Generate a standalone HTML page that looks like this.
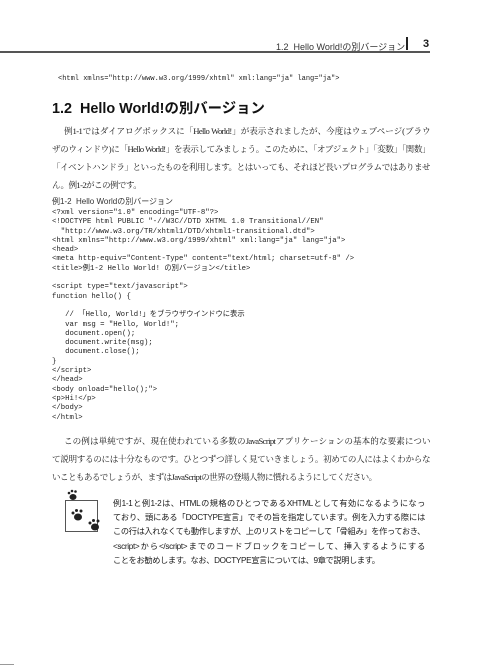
<!DOCTYPE html>
<html><head><meta charset="utf-8"><style>
body{margin:0;width:488px;height:669px;background:#fff;position:relative;overflow:hidden;color:#1a1a1a}
.a{position:absolute;white-space:nowrap}
.m{font-family:"Liberation Mono","Noto Sans CJK JP",monospace;font-size:7.3px;color:#222}
.s{font-family:"Liberation Serif","Noto Serif CJK SC",serif;font-size:8.6px;letter-spacing:-0.62px;width:378px;text-align:justify;text-align-last:justify;overflow:hidden;height:14px;line-height:14px}
.g{font-family:"Liberation Sans","Noto Sans CJK JP",sans-serif}
.n{font-size:8.2px;letter-spacing:-0.35px;width:312px;text-align:justify;text-align-last:justify;overflow:hidden;height:13px;line-height:13px}
</style></head><body>
<div class="a g" style="left:276px;top:40px;font-size:9px;color:#333">1.2&nbsp; Hello World!の別バージョン</div>
<div class="a" style="left:406px;top:37px;width:1.5px;height:13px;background:#222"></div>
<div class="a g" style="left:423px;top:38px;font-size:11px;font-weight:bold">3</div>
<div class="a" style="left:0;top:51px;width:430px;height:1.5px;background:#555"></div>

<div class="a m" style="left:58px;top:75px;font-size:7px">&lt;html xmlns="http://www.w3.org/1999/xhtml" xml:lang="ja" lang="ja"&gt;</div>

<div class="a g" style="left:52px;top:97px;font-size:14.4px;font-weight:bold;color:#111">1.2&nbsp; Hello World!の別バージョン</div>

<div class="a s" style="left:64px;top:124px;width:366px">例1-1ではダイアログボックスに「Hello World!」が表示されましたが、今度はウェブページ(ブラウ</div>
<div class="a s" style="left:52px;top:142px">ザのウィンドウ)に「Hello World!」を表示してみましょう。このために、「オブジェクト」「変数」「関数」</div>
<div class="a s" style="left:52px;top:160px">「イベントハンドラ」といったものを利用します。とはいっても、それほど長いプログラムではありませ</div>
<div class="a s" style="left:52px;top:178px;text-align-last:left">ん。例1-2がこの例です。</div>

<div class="a g" style="left:52px;top:196px;font-size:8px;color:#333">例1-2&nbsp; Hello Worldの別バージョン</div>
<div class="a m" style="left:52px;top:209px;line-height:9.3px">&lt;?xml version="1.0" encoding="UTF-8"?&gt;<br>&lt;!DOCTYPE html PUBLIC "-//W3C//DTD XHTML 1.0 Transitional//EN"<br>&nbsp; "http://www.w3.org/TR/xhtml1/DTD/xhtml1-transitional.dtd"&gt;<br>&lt;html xmlns="http://www.w3.org/1999/xhtml" xml:lang="ja" lang="ja"&gt;<br>&lt;head&gt;<br>&lt;meta http-equiv="Content-Type" content="text/html; charset=utf-8" /&gt;<br>&lt;title&gt;例1-2 Hello World! の別バージョン&lt;/title&gt;<br><br>&lt;script type="text/javascript"&gt;<br>function hello() {<br><br>&nbsp;&nbsp; // 「Hello, World!」をブラウザウインドウに表示<br>&nbsp;&nbsp; var msg = "Hello, World!";<br>&nbsp;&nbsp; document.open();<br>&nbsp;&nbsp; document.write(msg);<br>&nbsp;&nbsp; document.close();<br>}<br>&lt;/script&gt;<br>&lt;/head&gt;<br>&lt;body onload="hello();"&gt;<br>&lt;p&gt;Hi!&lt;/p&gt;<br>&lt;/body&gt;<br>&lt;/html&gt;</div>

<div class="a s" style="left:64px;top:434px;width:366px">この例は単純ですが、現在使われている多数のJavaScriptアプリケーションの基本的な要素につい</div>
<div class="a s" style="left:52px;top:452px">て説明するのには十分なものです。ひとつずつ詳しく見ていきましょう。初めての人にはよくわからな</div>
<div class="a s" style="left:52px;top:470px;text-align-last:left">いこともあるでしょうが、まずはJavaScriptの世界の登場人物に慣れるようにしてください。</div>

<div class="a" style="left:65px;top:500px;width:31px;height:30px;border:1px solid #555"></div>
<svg class="a" style="left:60px;top:488px" width="50" height="50" viewBox="0 0 50 50" fill="#222">
<g transform="translate(13,7)"><ellipse cx="0" cy="2" rx="3.5" ry="3"/><circle cx="-4" cy="-2" r="1.3"/><circle cx="-1" cy="-4" r="1.3"/><circle cx="2.5" cy="-3.5" r="1.3"/></g>
<g transform="translate(18,27)"><ellipse cx="0" cy="2" rx="4" ry="3.5"/><circle cx="-5" cy="-2" r="1.5"/><circle cx="-1.5" cy="-4.5" r="1.5"/><circle cx="3" cy="-4" r="1.5"/></g>
<g transform="translate(35,37)"><ellipse cx="0" cy="2" rx="4" ry="3.5"/><circle cx="-5" cy="-2" r="1.5"/><circle cx="-1.5" cy="-4.5" r="1.5"/><circle cx="3" cy="-4" r="1.5"/></g>
</svg>

<div class="a g n" style="left:113px;top:497px">例1-1と例1-2は、HTMLの規格のひとつであるXHTMLとして有効になるようになっ</div>
<div class="a g n" style="left:113px;top:511px">ており、頭にある「DOCTYPE宣言」でその旨を指定しています。例を入力する際には</div>
<div class="a g n" style="left:113px;top:525px">この行は入れなくても動作しますが、上のリストをコピーして「骨組み」を作っておき、</div>
<div class="a g n" style="left:113px;top:540px">&lt;script&gt;から&lt;/script&gt;までのコードブロックをコピーして、挿入するようにする</div>
<div class="a g n" style="left:113px;top:554px;text-align-last:left">ことをお勧めします。なお、DOCTYPE宣言については、9章で説明します。</div>

<div class="a" style="left:0;top:664px;width:14px;height:1px;background:#999"></div>
</body></html>
